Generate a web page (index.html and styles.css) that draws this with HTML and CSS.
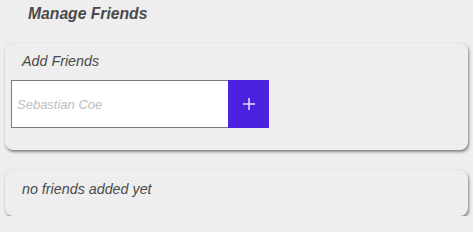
FILE: index.html
```html
<!DOCTYPE html>
<html lang="en">

<head>
    <meta charset="UTF-8">
    <meta name="viewport" content="width=device-width, initial-scale=1.0">
    <title>Manage Friends</title>
    <link rel="stylesheet" href="styles.css">
</head>

<body>
    <div class="container">
        <h2 class="title">Manage Friends</h2>
        <div class="card add-card">
            <p class="card-label">Add Friends</p>
            <div class="add-row">
                <input type="text" class="friend-input" placeholder="Sebastian Coe">
                <button type="button" class="add-btn">
                    <svg width="14" height="14" viewBox="0 0 14 14">
                        <path d="M7 1v12M1 7h12" stroke="#e4dcf6" stroke-width="1.6" fill="none" />
                    </svg>
                </button>
            </div>
        </div>
        <div class="card list-card">
            <p class="empty">no friends added yet</p>
        </div>
    </div>
</body>

</html>
```

FILE: styles.css
```css
* {
    box-sizing: border-box;
}

body {
    margin: 0;
    padding: 0;
    background-color: #eeeeee;
    font-family: "Liberation Sans", Arial, sans-serif;
    color: #444;
}

.container {
    padding: 4px 5px 0 5px;
}

.title {
    margin: 0 0 0 23px;
    font-size: 15.7px;
    font-style: italic;
    font-weight: bold;
    color: #4a4a4a;
    line-height: 20px;
}

.card {
    width: 463px;
    background-color: #eeeeee;
    border-radius: 8px;
    box-shadow: 1px 2px 3px rgba(0, 0, 0, 0.45), 0 0 1px rgba(0, 0, 0, 0.12);
}

.add-card {
    margin-top: 19px;
    height: 107px;
    padding: 10px 0 0 6px;
}

.card-label {
    margin: 0 0 0 11px;
    font-size: 14.3px;
    font-style: italic;
    line-height: 16px;
    color: #4a4a4a;
}

.add-row {
    display: flex;
    margin-top: 11px;
}

.friend-input {
    width: 217px;
    height: 48px;
    border: 1px solid #7a7a7a;
    border-right: none;
    background: #fff;
    padding: 0 5px;
    font-family: "Liberation Sans", Arial, sans-serif;
    font-size: 13px;
    font-style: italic;
    outline: none;
}

.friend-input::placeholder {
    color: #bdbdbd;
}

.add-btn {
    width: 41px;
    height: 48px;
    border: none;
    padding: 0;
    background-color: #4a22e0;
    display: flex;
    justify-content: center;
    align-items: center;
    cursor: pointer;
}

.list-card {
    margin-top: 20px;
    height: 46px;
    padding: 11px 0 0 17px;
}

.empty {
    margin: 0;
    font-size: 14.3px;
    font-style: italic;
    line-height: 16px;
    color: #4a4a4a;
}
```
